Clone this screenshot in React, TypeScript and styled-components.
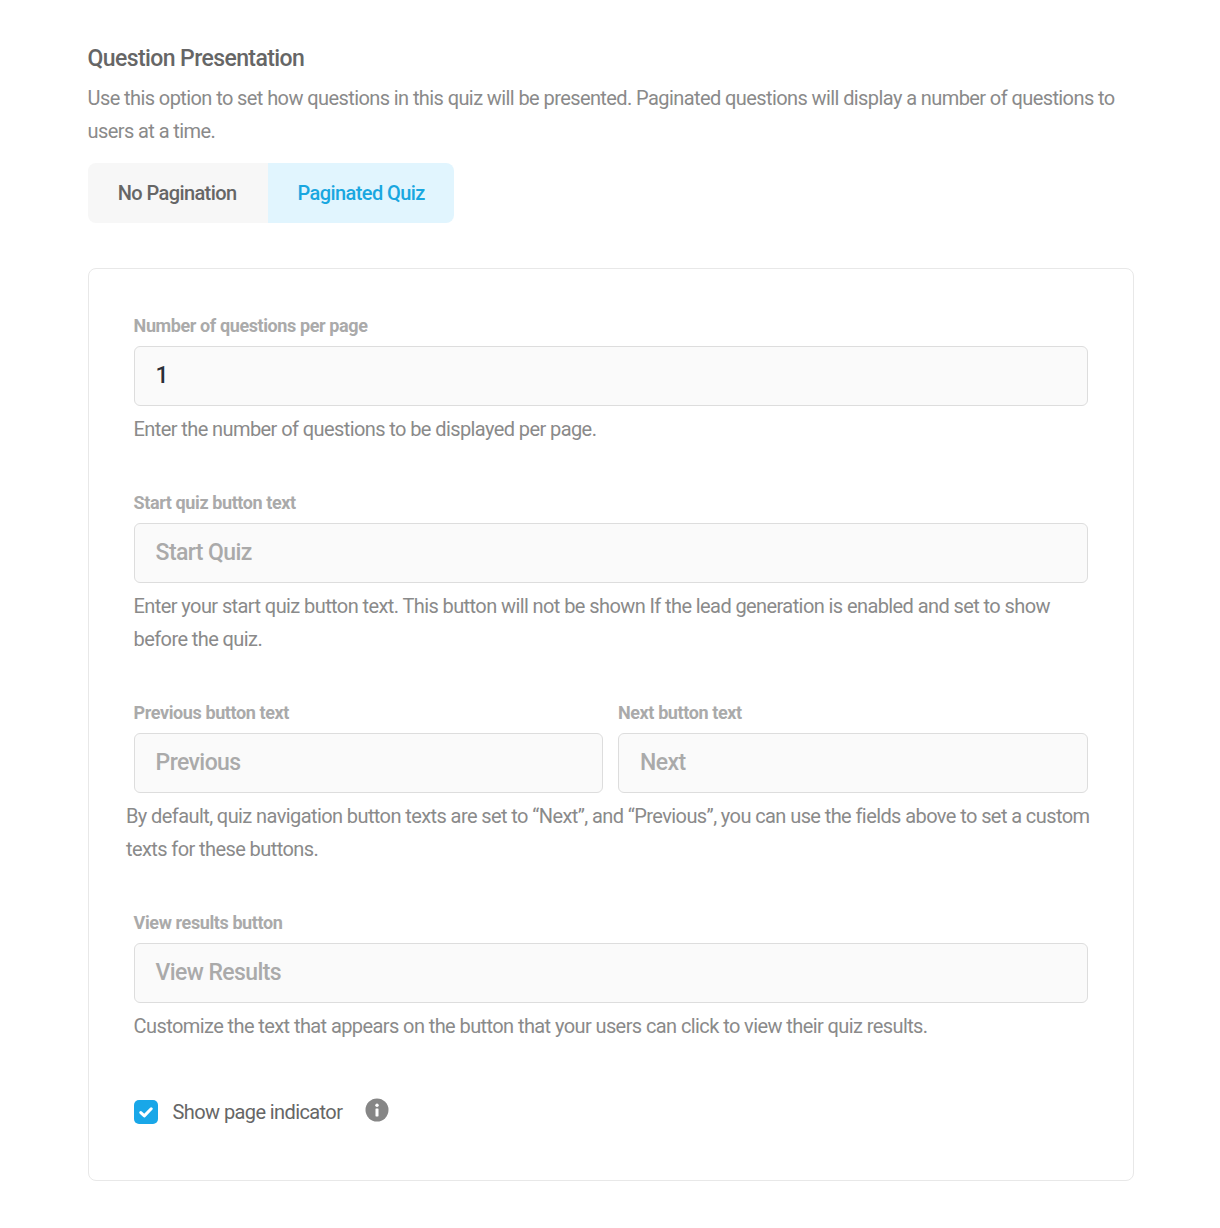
import styled, { createGlobalStyle } from "styled-components";

const GlobalStyle = createGlobalStyle`
  html, body {
    margin: 0;
    padding: 0;
    background: #fff;
  }
  body {
    font-family: Roboto, "Liberation Sans", sans-serif;
    -webkit-font-smoothing: auto;
  }
`;

const Page = styled.div`
  width: 1220px;
  height: 1228px;
  box-sizing: border-box;
  padding: 44px 86.4px 0 87.6px;
`;

const Title = styled.h3`
  margin: 0;
  font-size: 23px;
  line-height: 30px;
  font-weight: 500;
  letter-spacing: -0.6px;
  color: #666;
`;

const Help = styled.p`
  margin: 0;
  font-size: 20px;
  line-height: 33px;
  font-weight: 400;
  letter-spacing: -0.59px;
  color: #8a8a8a;
`;

const Intro = styled(Help)`
  margin-top: 8px;
`;

const Tabs = styled.div`
  display: flex;
  margin-top: 15px;
`;

const Tab = styled.button<{ $active?: boolean }>`
  height: 60px;
  width: ${(p) => (p.$active ? "186px" : "180px")};
  padding: ${(p) => (p.$active ? "0 0 0 1px" : "0 1px 0 0")};
  border: 0;
  border-radius: ${(p) => (p.$active ? "0 8px 8px 0" : "8px 0 0 8px")};
  background: ${(p) => (p.$active ? "#e1f5fe" : "#f7f7f7")};
  color: ${(p) => (p.$active ? "#19a7e0" : "#666")};
  font-family: inherit;
  font-size: 20px;
  font-weight: 500;
  letter-spacing: -0.6px;
`;

const Panel = styled.div`
  margin-top: 45px;
  height: 913px;
  box-sizing: border-box;
  padding: 46px 45px 0;
  border: 1px solid #e8e8e8;
  border-radius: 8px;
`;

const Field = styled.div`
  margin-bottom: 46px;
`;

const Label = styled.label`
  display: block;
  height: 22px;
  margin-bottom: 9px;
  font-size: 18px;
  line-height: 22px;
  font-weight: 700;
  letter-spacing: -0.4px;
  color: #aaa;
`;

const Input = styled.div<{ $filled?: boolean }>`
  height: 60px;
  box-sizing: border-box;
  padding: 0 21px 2px;
  display: flex;
  align-items: center;
  border: 1px solid #ddd;
  border-radius: 6px;
  background: #fafafa;
  font-size: 23px;
  font-weight: 500;
  letter-spacing: -0.6px;
  color: ${(p) => (p.$filled ? "#2a2f38" : "#aaa")};
`;

const FieldHelp = styled(Help)`
  margin-top: 7px;
`;

const Pair = styled.div`
  display: grid;
  grid-template-columns: 469px 469.6px;
  column-gap: 15.4px;
`;

const WideHelp = styled(FieldHelp)`
  margin-left: -7.6px;
  margin-right: -8.4px;
`;

const CheckRow = styled.div`
  display: flex;
  align-items: center;
  height: 26px;
  margin-top: 56px;
`;

const CheckBox = styled.span`
  width: 24px;
  height: 24px;
  display: flex;
  align-items: center;
  justify-content: center;
  border-radius: 5px;
  background: #19a7e8;
`;

const CheckLabel = styled.span`
  margin-left: 15px;
  font-size: 20px;
  font-weight: 400;
  letter-spacing: -0.6px;
  color: #666;
`;

const InfoIcon = styled.svg`
  margin-left: 23px;
  margin-top: -4px;
`;

const App = () => {
  return (
    <>
      <GlobalStyle />
      <Page>
        <Title>Question Presentation</Title>
        <Intro>
          Use this option to set how questions in this quiz will be presented. Paginated questions
          will display a number of questions to users at a time.
        </Intro>
        <Tabs>
          <Tab>No Pagination</Tab>
          <Tab $active>Paginated Quiz</Tab>
        </Tabs>
        <Panel>
          <Field>
            <Label>Number of questions per page</Label>
            <Input $filled>1</Input>
            <FieldHelp>Enter the number of questions to be displayed per page.</FieldHelp>
          </Field>
          <Field>
            <Label>Start quiz button text</Label>
            <Input>Start Quiz</Input>
            <FieldHelp>
              Enter your start quiz button text. This button will not be shown If the lead
              generation is enabled and set to show before the quiz.
            </FieldHelp>
          </Field>
          <Field>
            <Pair>
              <div>
                <Label>Previous button text</Label>
                <Input>Previous</Input>
              </div>
              <div>
                <Label>Next button text</Label>
                <Input>Next</Input>
              </div>
            </Pair>
            <WideHelp>
              By default, quiz navigation button texts are set to “Next”, and “Previous”, you can
              use the fields above to set a custom texts for these buttons.
            </WideHelp>
          </Field>
          <div>
            <Label>View results button</Label>
            <Input>View Results</Input>
            <FieldHelp>
              Customize the text that appears on the button that your users can click to view their
              quiz results.
            </FieldHelp>
          </div>
          <CheckRow>
            <CheckBox>
              <svg width="14" height="11" viewBox="0 0 14 11" fill="none">
                <path d="M1.8 5.6l3.5 3.3 6.9-7.1" stroke="#fff" strokeWidth="3" strokeLinecap="round" strokeLinejoin="round" />
              </svg>
            </CheckBox>
            <CheckLabel>Show page indicator</CheckLabel>
            <InfoIcon width="24" height="24" viewBox="0 0 24 24">
              <circle cx="12" cy="12" r="11.5" fill="#868686" />
              <circle cx="12" cy="7.3" r="1.7" fill="#fff" />
              <rect x="10.5" y="10.4" width="3" height="8" rx="0.6" fill="#fff" />
            </InfoIcon>
          </CheckRow>
        </Panel>
      </Page>
    </>
  );
};

export default App;
